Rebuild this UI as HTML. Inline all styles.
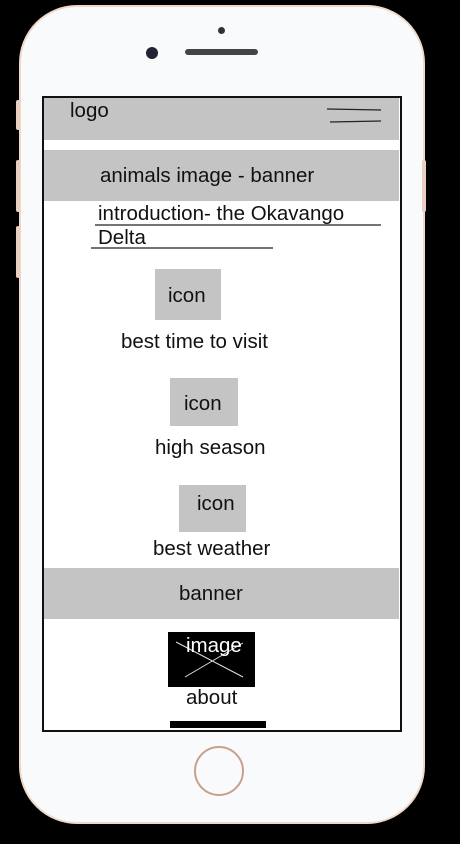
<!DOCTYPE html>
<html><head><style>
body{margin:0;width:460px;height:844px;background:#000;position:relative;overflow:hidden;font-family:"Liberation Sans",Arial,sans-serif;}
.a{position:absolute}
.t{position:absolute;font-size:20.5px;color:#111;white-space:nowrap;line-height:22px}
.g{position:absolute;background:#c4c4c4}
</style></head><body>
<div class="a" style="left:19px;top:5px;width:402px;height:815px;border-radius:58px;background:#f9fafc;border:2px solid #f0d8c8;"></div>
<div class="a" style="left:16px;top:100px;width:4px;height:30px;background:#e8cfc0;border-radius:2px"></div>
<div class="a" style="left:16px;top:160px;width:4px;height:52px;background:#e8cfc0;border-radius:2px"></div>
<div class="a" style="left:16px;top:226px;width:4px;height:52px;background:#e8cfc0;border-radius:2px"></div>
<div class="a" style="left:422px;top:160px;width:4px;height:52px;background:#e8cfc0;border-radius:2px"></div>
<div class="a" style="left:218px;top:27px;width:7px;height:7px;border-radius:50%;background:#333"></div>
<div class="a" style="left:146px;top:47px;width:12px;height:12px;border-radius:50%;background:#223"></div>
<div class="a" style="left:185px;top:49px;width:73px;height:6px;border-radius:3px;background:#444"></div>
<div class="a" style="left:194px;top:746px;width:50px;height:50px;border-radius:50%;border:2px solid #c9a08a;box-sizing:border-box"></div>
<div class="a" style="left:42px;top:96px;width:356px;height:632px;background:#fff;border:2px solid #111;overflow:hidden">
</div>
<div class="g" style="left:44px;top:98px;width:355px;height:42px"></div>
<div class="t" style="left:70px;top:100px">logo</div>
<svg class="a" style="left:0;top:0" width="460" height="844">
<line x1="327" y1="109" x2="381" y2="110" stroke="#222" stroke-width="1.2"/>
<line x1="330" y1="122" x2="381" y2="121" stroke="#222" stroke-width="1.2"/>
<line x1="95" y1="225" x2="381" y2="225" stroke="#222" stroke-width="1.2"/>
<line x1="91" y1="248" x2="273" y2="248" stroke="#222" stroke-width="1.2"/>
</svg>
<div class="g" style="left:44px;top:150px;width:355px;height:51px"></div>
<div class="t" style="left:100px;top:165px">animals image - banner</div>
<div class="t" style="left:98px;top:203px">introduction- the Okavango</div>
<div class="t" style="left:98px;top:227px">Delta</div>
<div class="g" style="left:155px;top:269px;width:66px;height:51px"></div>
<div class="t" style="left:168px;top:285px">icon</div>
<div class="t" style="left:121px;top:331px">best time to visit</div>
<div class="g" style="left:170px;top:378px;width:68px;height:48px"></div>
<div class="t" style="left:184px;top:393px">icon</div>
<div class="t" style="left:155px;top:437px">high season</div>
<div class="g" style="left:179px;top:485px;width:67px;height:47px"></div>
<div class="t" style="left:197px;top:493px">icon</div>
<div class="t" style="left:153px;top:538px">best weather</div>
<div class="g" style="left:44px;top:568px;width:355px;height:51px"></div>
<div class="t" style="left:179px;top:583px">banner</div>
<div class="a" style="left:168px;top:632px;width:87px;height:55px;background:#000"></div>
<svg class="a" style="left:0;top:0" width="460" height="844">
<line x1="176" y1="642" x2="243" y2="677" stroke="#ddd" stroke-width="1"/>
<line x1="185" y1="677" x2="243" y2="643" stroke="#ddd" stroke-width="1"/>
</svg>
<div class="t" style="left:186px;top:635px;color:#fff">image</div>
<div class="t" style="left:186px;top:687px">about</div>
<div class="a" style="left:170px;top:721px;width:96px;height:7px;background:#000"></div>
</body></html>
